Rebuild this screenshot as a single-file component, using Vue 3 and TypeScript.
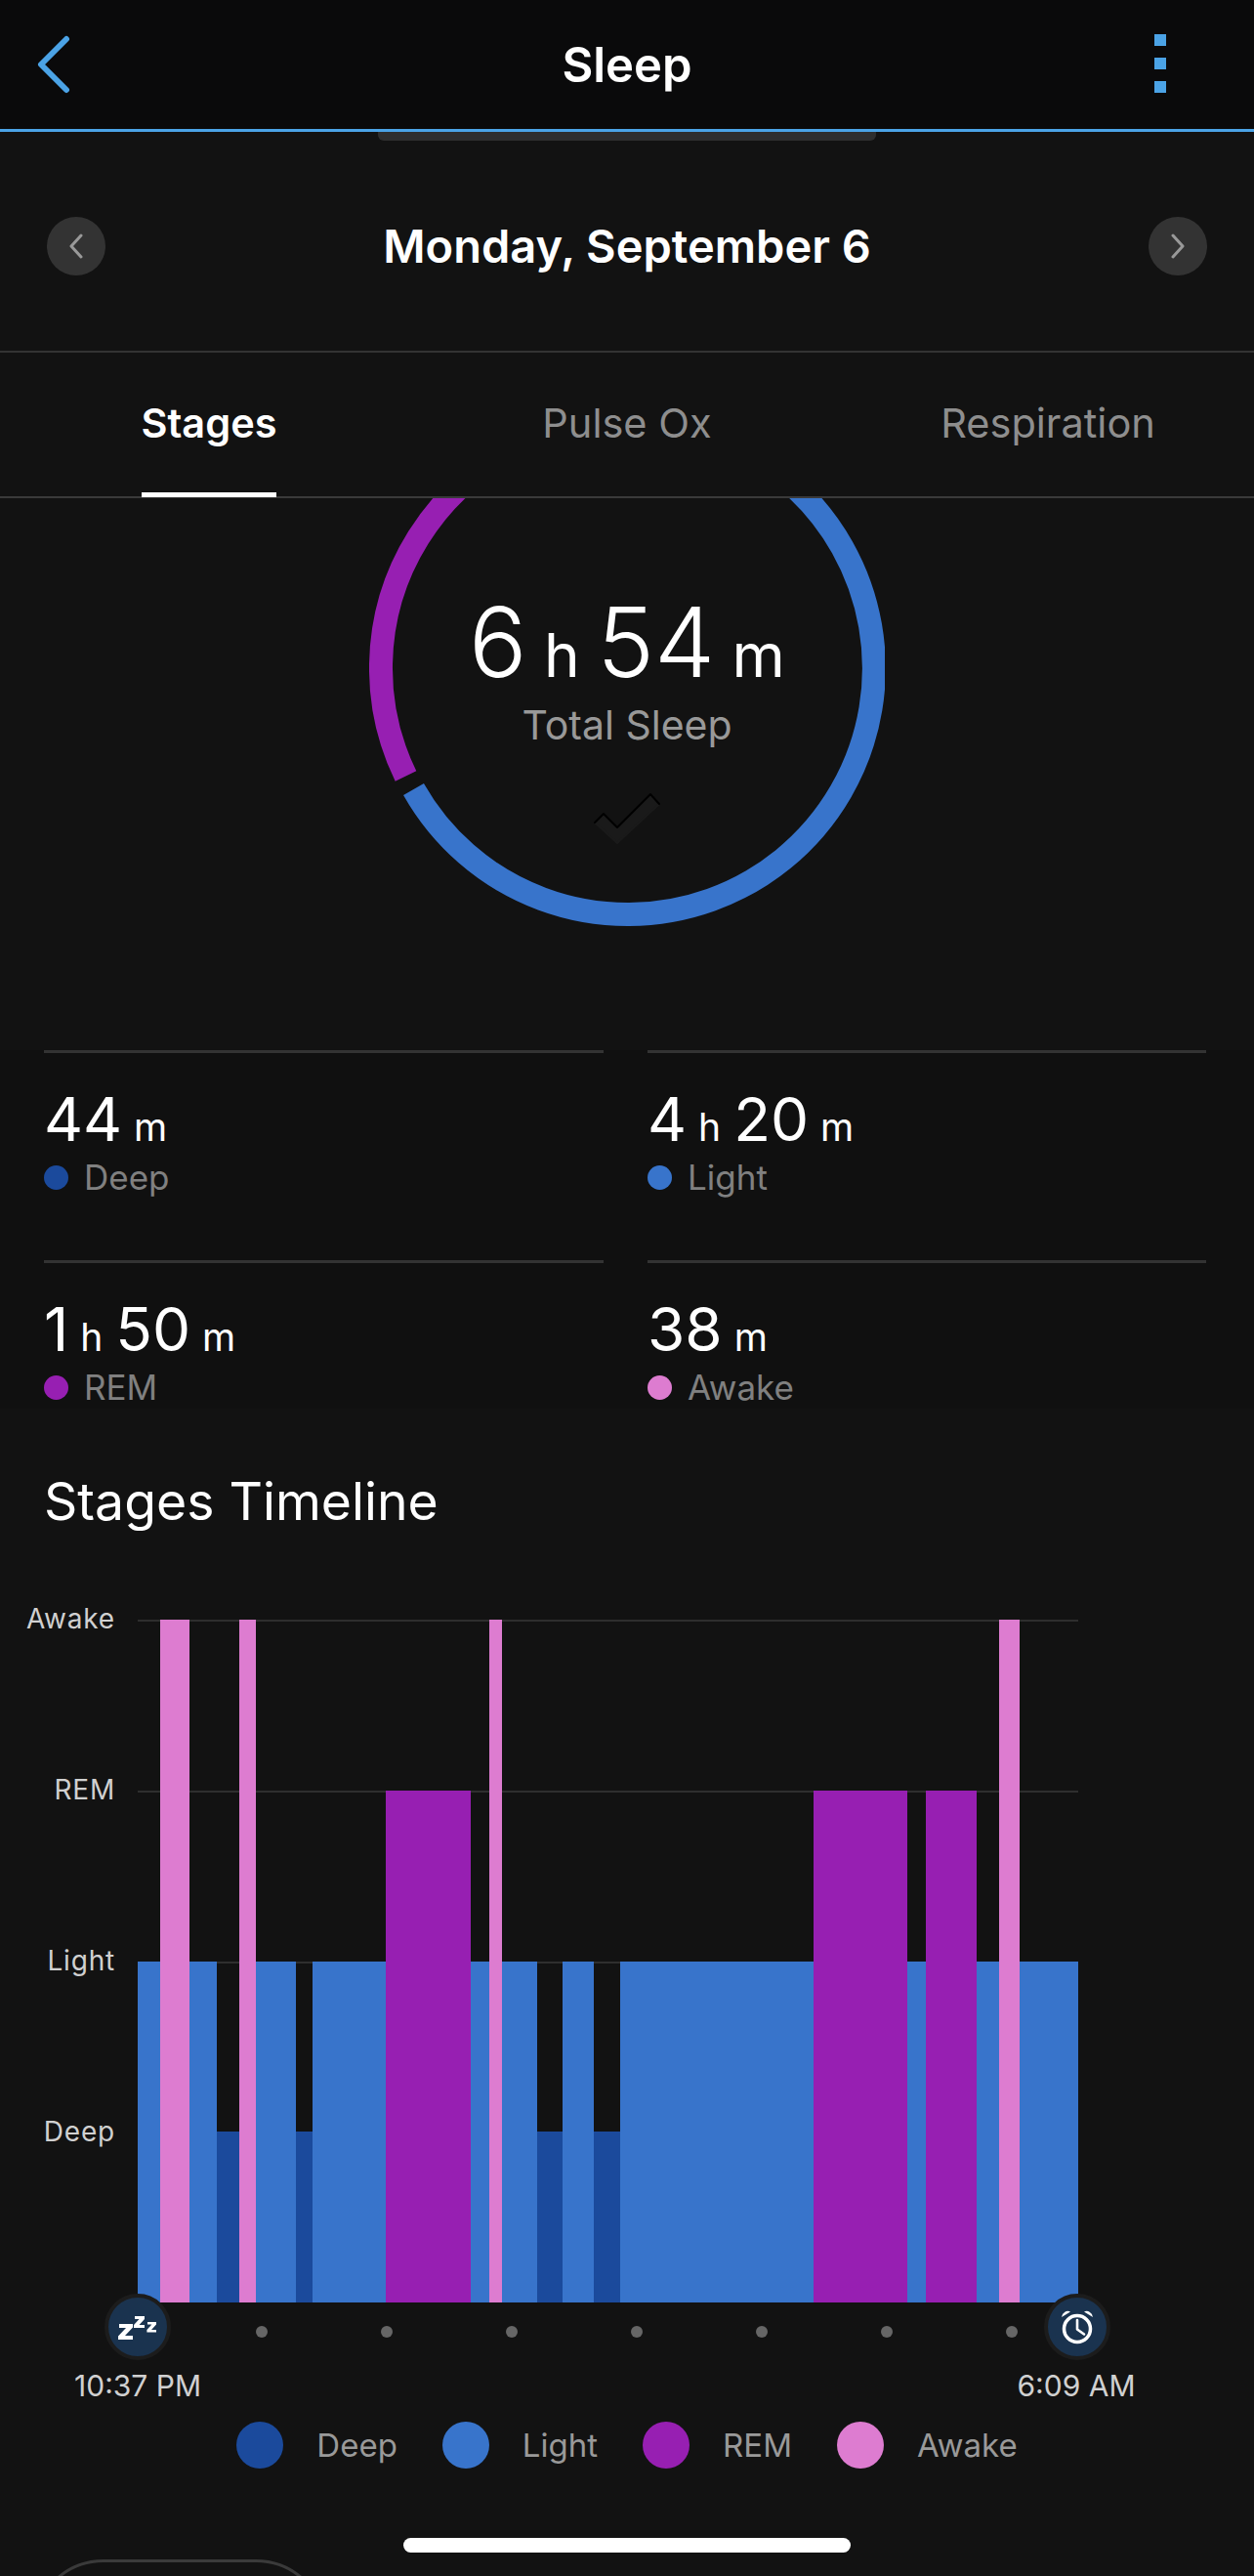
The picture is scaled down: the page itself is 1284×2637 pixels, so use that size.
<template>
  <div class="page">
    <header class="top">
      <svg class="back" width="36" height="60" viewBox="0 0 36 60" fill="none" stroke="currentColor" stroke-width="6" stroke-linecap="round" stroke-linejoin="round">
        <path d="M32 4 L6 30 L32 56" />
      </svg>
      <h1 class="top__title">Sleep</h1>
      <div class="more"><i></i><i></i><i></i></div>
      <div class="handle"></div>
    </header>

    <div class="date">
      <button class="nav">
        <svg width="16" height="26" viewBox="0 0 16 26" fill="none" stroke="currentColor" stroke-width="3" stroke-linecap="round" stroke-linejoin="round"><path d="M13 2 L3 13 L13 24" /></svg>
      </button>
      <div class="date__text">Monday, September 6</div>
      <button class="nav">
        <svg width="16" height="26" viewBox="0 0 16 26" fill="none" stroke="currentColor" stroke-width="3" stroke-linecap="round" stroke-linejoin="round"><path d="M3 2 L13 13 L3 24" /></svg>
      </button>
    </div>

    <nav class="tabs">
      <div v-for="t in tabs" :key="t" class="tab" :class="{ 'tab--on': t === 'Stages' }"><span>{{ t }}</span></div>
    </nav>

    <section class="ring">
      <svg class="ring__svg" width="528" height="528" viewBox="0 0 528 528" fill="none" stroke-width="24">
        <path d="M37.5 374.5 A252 252 0 0 1 264 12" stroke="#971fb2" />
        <path d="M45.5 388 A252 252 0 1 0 264 12" stroke="#3874cb" />
      </svg>
      <div class="ring__inner">
        <div class="ring__value"><b>6</b> h <b>54</b> m</div>
        <div class="ring__label">Total Sleep</div>
        <svg class="ring__check" width="68" height="52" viewBox="-1 -1 68 52" stroke-linejoin="round" stroke-linecap="round">
          <path d="M9 20 L0 29 L23 50 L66 10 L57 0 L23 34 Z" fill="#1a1a1a" stroke="#1a1a1a" stroke-width="2" />
          <path d="M0 29 L9 20 L23 34 L57 0 L66 10" fill="none" stroke="#000" stroke-width="2" />
        </svg>
      </div>
    </section>

    <section class="stats">
      <div v-for="s in stats" :key="s.label" class="stat">
        <div class="stat__value">
          <template v-for="(p, i) in s.parts" :key="i"><b>{{ p[0] }}</b><small>{{ p[1] }}</small></template>
        </div>
        <div class="stat__label"><i :style="{ background: colors[s.kind] }"></i>{{ s.label }}</div>
      </div>
    </section>

    <h2 class="heading">Stages Timeline</h2>

    <section class="chart">
      <div class="chart__labels">
        <div v-for="l in levels" :key="l" class="chart__label">{{ l }}</div>
      </div>
      <div class="plot">
        <div class="plot__grid"><div></div><div></div><div></div><div></div></div>
        <div class="plot__bars">
          <div
            v-for="(b, i) in bars"
            :key="i"
            :style="{ width: b.w + 'px', height: heights[b.kind] + 'px', background: colors[b.kind] }"
          ></div>
        </div>
      </div>
    </section>

    <div class="axis">
      <div class="axis__dots"><i v-for="n in 7" :key="n"></i></div>
      <div class="badge badge--start">
        <svg width="40" height="30" viewBox="0 0 40 30" fill="#fff">
          <path d="M1 12h14v3.5L7 24h8v4H0v-3.5L8 16H1z" />
          <path d="M17 4h10v3l-5.5 6H27v3H16v-3l5.5-6H17z" />
          <path d="M30 10h9v2.6L34 18h5v2.6h-9.6V18l5-5.4H30z" />
        </svg>
      </div>
      <div class="badge badge--end">
        <svg width="36" height="38" viewBox="0 0 36 38" fill="none" stroke="#fff">
          <circle cx="18" cy="21" r="13.5" stroke-width="3.5" />
          <path d="M18 12v9.5l7 5" stroke-width="2.6" stroke-linecap="round" stroke-linejoin="round" />
          <path d="M2 9a6.5 6.5 0 0 1 9-5.6z" fill="#fff" stroke="none" />
          <path d="M34 9a6.5 6.5 0 0 0-9-5.6z" fill="#fff" stroke="none" />
        </svg>
      </div>
    </div>
    <div class="times"><span>10:37 PM</span><span>6:09 AM</span></div>

    <div class="legend">
      <div v-for="l in legend" :key="l.label" class="legend__item">
        <i :style="{ background: colors[l.kind] }"></i>{{ l.label }}
      </div>
    </div>

    <div class="home"></div>
    <div class="peek"></div>
  </div>
</template>

<script setup lang="ts">
type Kind = 'deep' | 'light' | 'rem' | 'awake'

const tabs = ['Stages', 'Pulse Ox', 'Respiration']
const levels = ['Awake', 'REM', 'Light', 'Deep']

const colors: Record<Kind, string> = {
  deep: '#1b4a9c',
  light: '#3874cb',
  rem: '#971fb2',
  awake: '#dd7cd0',
}

const heights: Record<Kind, number> = { deep: 175, light: 349, rem: 524, awake: 699 }

const stats: { parts: [string, string][]; label: string; kind: Kind }[] = [
  { parts: [['44', 'm']], label: 'Deep', kind: 'deep' },
  { parts: [['4', 'h'], ['20', 'm']], label: 'Light', kind: 'light' },
  { parts: [['1', 'h'], ['50', 'm']], label: 'REM', kind: 'rem' },
  { parts: [['38', 'm']], label: 'Awake', kind: 'awake' },
]

const legend: { label: string; kind: Kind }[] = [
  { label: 'Deep', kind: 'deep' },
  { label: 'Light', kind: 'light' },
  { label: 'REM', kind: 'rem' },
  { label: 'Awake', kind: 'awake' },
]

const bars: { w: number; kind: Kind }[] = [
  { w: 23, kind: 'light' },
  { w: 30, kind: 'awake' },
  { w: 28, kind: 'light' },
  { w: 23, kind: 'deep' },
  { w: 17, kind: 'awake' },
  { w: 41, kind: 'light' },
  { w: 17, kind: 'deep' },
  { w: 75, kind: 'light' },
  { w: 87, kind: 'rem' },
  { w: 19, kind: 'light' },
  { w: 13, kind: 'awake' },
  { w: 36, kind: 'light' },
  { w: 26, kind: 'deep' },
  { w: 32, kind: 'light' },
  { w: 27, kind: 'deep' },
  { w: 198, kind: 'light' },
  { w: 96, kind: 'rem' },
  { w: 19, kind: 'light' },
  { w: 52, kind: 'rem' },
  { w: 23, kind: 'light' },
  { w: 21, kind: 'awake' },
  { w: 60, kind: 'light' },
]
</script>

<style>
html, body { background: #121212; }
</style>

<style scoped>
.page {
  position: relative;
  width: 1284px;
  height: 2637px;
  overflow: hidden;
  background: #121212;
  color: #fff;
  font-family: Inter, "Liberation Sans", sans-serif;
}

.top {
  position: relative;
  display: flex;
  align-items: center;
  justify-content: center;
  height: 132px;
  background: #0a0a0b;
  border-bottom: 3px solid #4ba3e6;
  box-sizing: content-box;
}
.top__title {
  margin: 0;
  font-size: 49px;
  font-weight: 600;
}
.back {
  position: absolute;
  left: 36px;
  top: 36px;
  color: #4ba3e6;
}
.more {
  position: absolute;
  left: 1182px;
  top: 35px;
  display: flex;
  flex-direction: column;
  gap: 12px;
}
.more i {
  width: 12px;
  height: 12px;
  background: #4ba3e6;
}
.handle {
  position: absolute;
  left: 387px;
  top: 135px;
  width: 510px;
  height: 9px;
  background: #2e2e2e;
  border-radius: 0 0 6px 6px;
}

.date {
  display: flex;
  align-items: center;
  justify-content: space-between;
  height: 226px;
  padding: 9px 48px 0;
  box-sizing: border-box;
  border-bottom: 2px solid #333;
}
.date__text {
  font-size: 47px;
  font-weight: 600;
}
.nav {
  display: flex;
  align-items: center;
  justify-content: center;
  width: 60px;
  height: 60px;
  padding: 0;
  border: 0;
  border-radius: 50%;
  background: #333;
  color: #999;
}

.tabs {
  display: grid;
  grid-template-columns: repeat(3, 1fr);
  height: 149px;
  box-sizing: border-box;
  border-bottom: 2px solid #3a3a3a;
}
.tab {
  display: flex;
  justify-content: center;
  font-size: 41.5px;
  color: #8e8e8e;
}
.tab span {
  display: flex;
  align-items: center;
  height: 148px;
  box-sizing: border-box;
  padding-bottom: 4px;
}
.tab:last-child span {
  margin-left: 6px;
}
.tab--on {
  color: #fff;
  font-weight: 600;
}
.tab--on span {
  padding-bottom: 0;
  border-bottom: 5px solid #fff;
}

.ring {
  position: relative;
  height: 565px;
  overflow: hidden;
}
.ring__svg {
  display: block;
  margin: -90px 0 0 378px;
}
.ring__inner {
  position: absolute;
  left: 378px;
  top: 0;
  width: 528px;
  display: flex;
  flex-direction: column;
  align-items: center;
  padding-top: 100px;
}
.ring__value {
  font-size: 62px;
  font-weight: 400;
  line-height: 94px;
  white-space: pre;
}
.ring__value b {
  font-size: 99px;
  font-weight: 300;
}
.ring__label {
  font-size: 41px;
  line-height: 48px;
  color: #999;
}
.ring__check {
  margin-top: 46px;
}

.stats {
  display: grid;
  grid-template-columns: 573px 572px;
  column-gap: 45px;
  row-gap: 63px;
  padding: 0 49px 0 45px;
  height: 367px;
  box-sizing: border-box;
  background: #101010;
}
.stat {
  height: 152px;
  box-sizing: border-box;
  border-top: 3px solid #333;
}
.stat__value {
  margin-top: 32px;
  display: flex;
  align-items: baseline;
  font-size: 40px;
  line-height: 72px;
}
.stat__value b {
  font-size: 62px;
  font-weight: 400;
  margin-right: 12px;
}
.stat__value small {
  font-size: 39px;
  margin-right: 13px;
}
.stat__label {
  display: flex;
  align-items: center;
  gap: 16px;
  margin-top: -6px;
  font-size: 35px;
  line-height: 42px;
  color: #808080;
}
.stat__label i {
  width: 25px;
  height: 25px;
  border-radius: 50%;
}

.heading {
  margin: 0;
  padding: 63px 0 0 45px;
  font-size: 53.5px;
  font-weight: 400;
  line-height: 64px;
}

.chart {
  display: flex;
  margin-top: 89px;
}
.chart__labels {
  width: 118px;
  margin-right: 23px;
  height: 699px;
}
.chart__label {
  height: 175px;
  margin-top: -18px;
  margin-bottom: 18px;
  text-align: right;
  font-size: 28px;
  line-height: 34px;
  letter-spacing: 0.8px;
  color: #d0d0d0;
}
.plot {
  position: relative;
  width: 963px;
  height: 699px;
}
.plot__grid {
  position: absolute;
  inset: 0;
  display: grid;
  grid-template-rows: repeat(4, 1fr);
}
.plot__grid div {
  border-top: 2px solid #2e2e2e;
}
.plot__grid div:last-child {
  border-top: 0;
}
.plot__bars {
  position: absolute;
  inset: 0;
  display: flex;
  align-items: flex-end;
}

.axis {
  position: relative;
  height: 68px;
}
.axis__dots {
  display: flex;
  gap: 116px;
  padding: 24px 0 0 262px;
}
.axis__dots i {
  width: 12px;
  height: 12px;
  border-radius: 50%;
  background: #666;
}
.badge {
  position: absolute;
  top: -9px;
  display: flex;
  align-items: center;
  justify-content: center;
  width: 60px;
  height: 60px;
  border: 4px solid #1c1c1c;
  border-radius: 50%;
  background: #1a334f;
}
.badge--start { left: 107px; }
.badge--end { left: 1069px; }

.times {
  display: flex;
  justify-content: space-between;
  padding: 0 102px 0 61px;
  font-size: 30px;
  line-height: 34px;
  color: #d0d0d0;
}
.times span {
  width: 160px;
  text-align: center;
}

.legend {
  display: flex;
  justify-content: center;
  gap: 46px;
  margin-top: 20px;
}
.legend__item {
  display: flex;
  align-items: center;
  gap: 34px;
  font-size: 33px;
  line-height: 48px;
  color: #999;
}
.legend__item i {
  width: 48px;
  height: 48px;
  border-radius: 50%;
}

.home {
  position: absolute;
  left: 413px;
  top: 2598px;
  width: 458px;
  height: 15px;
  border-radius: 8px;
  background: #fff;
}
.peek {
  position: absolute;
  left: 33px;
  top: 2620px;
  width: 302px;
  height: 150px;
  box-sizing: border-box;
  border: 3px solid #3a3a3a;
  border-radius: 73px;
}
</style>
